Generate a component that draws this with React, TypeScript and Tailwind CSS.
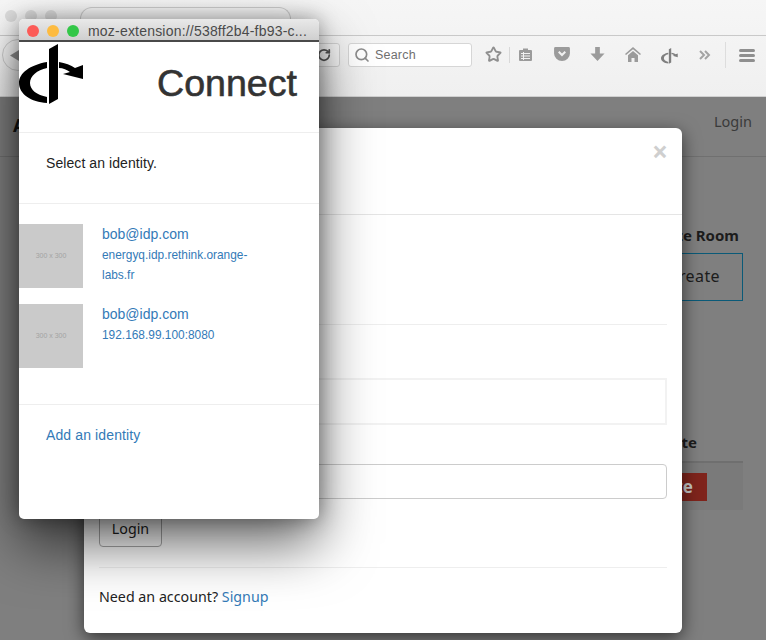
import React from 'react'
import { Search, Star, RotateCw } from 'lucide-react'

const popupFont = "font-['Liberation_Sans',Arial,sans-serif]"
const link = 'text-[#337ab7]'

const OpenIdMark = ({ width, height, fill }: { width: number; height: number; fill: string }) => (
  <svg width={width} height={height} viewBox="19 44 65 61" fill={fill}>
    <path d="M49 49L58 44V99L49 104Z" />
    <path d="M47 62C30 65 19 73 19 83C19 94 31 102 47 103V97C37 95 30 90 30 83C30 76 37 70 47 68Z" />
    <path d="M59 62C65 63 71 65 75 68L83 65V79L63 74L70 72C67 70 63 68 59 68Z" />
  </svg>
)

const Identity = ({ email, host }: { email: string; host: string }) => (
  <div className="flex h-16 gap-[19px]">
    <div className="flex h-16 w-16 shrink-0 items-center justify-center bg-[#cacaca] text-[7px] text-[#a3a3a3]">300 x 300</div>
    <div className={link}>
      <div className="text-sm leading-5">{email}</div>
      <div className="mt-[2px] w-[160px] text-[11.9px] leading-[19.5px]">{host}</div>
    </div>
  </div>
)

const Popup = () => (
  <div className={`absolute left-[19px] top-[19px] flex h-[500px] w-[300px] flex-col overflow-hidden rounded-[5px] bg-white shadow-[0_25px_55px_rgba(0,0,0,0.6),0_0_20px_rgba(0,0,0,0.35)] ${popupFont}`}>
    <div className="flex h-[23px] shrink-0 items-center gap-2 border-b-2 border-[#4a4a4a] bg-gradient-to-b from-[#e9e9e9] to-[#cfcfcf] pl-2 pt-[2px]">
      <span className="h-3 w-3 rounded-full bg-[#fc5b57]" />
      <span className="h-3 w-3 rounded-full bg-[#fdbb40]" />
      <span className="h-3 w-3 rounded-full bg-[#33c748]" />
      <span className="ml-px text-sm leading-4 tracking-[0.2px] text-[#4a4a4a]">moz-extension://538ff2b4-fb93-c...</span>
    </div>
    <div className="relative h-[91px] shrink-0 border-b border-[#eeeeee] pr-[22px] pt-[18px] text-right text-[37.6px] leading-[46px] text-[#333333] [-webkit-text-stroke:0.6px_#333333]">
      <div className="absolute left-0 top-[2px] flex">
        <OpenIdMark width={65} height={61} fill="#000000" />
      </div>
      Connect
    </div>
    <div className="h-[71px] shrink-0 border-b border-[#eeeeee] pl-[27px] pt-5 text-sm leading-5 tracking-[0.08px] text-[#222222]">Select an identity.</div>
    <div className="flex h-[201px] shrink-0 flex-col gap-4 border-b border-[#eeeeee] pt-5">
      <Identity email="bob@idp.com" host="energyq.idp.rethink.orange-labs.fr" />
      <Identity email="bob@idp.com" host="192.168.99.100:8080" />
    </div>
    <div className={`pl-[27px] pt-5 text-sm leading-5 tracking-[0.12px] ${link}`}>Add an identity</div>
  </div>
)

const Modal = () => (
  <div className="absolute left-[84px] top-[128px] flex h-[505px] w-[598px] flex-col rounded-[6px] bg-white font-['Noto_Sans',sans-serif] text-[14.25px] text-[#222222] shadow-[0_5px_18px_rgba(0,0,0,0.6)]">
    <div className="h-[87px] shrink-0 border-b border-[#e5e5e5] pr-[14px] pt-[8px] text-right text-[28px] font-bold leading-[30px] text-[#cfcfcf]">×</div>
    <div className="flex flex-1 flex-col px-[15px]">
      <div className="h-[110px] shrink-0 border-b border-[#eeeeee]" />
      <div className="mt-[53px] h-[47px] shrink-0 border-2 border-[#f2f2f2]" />
      <div className="mt-[39px] h-[35px] shrink-0 rounded-[4px] border border-[#cccccc]" />
      <div className="mt-[11px] flex h-[37px] w-[63px] shrink-0 items-center justify-center rounded-[4px] border border-[#aaaaaa]">Login</div>
      <div className="mt-5 flex-1 border-t border-[#eeeeee] pt-[19px] leading-5">
        Need an account? <span className={link}>Signup</span>
      </div>
    </div>
  </div>
)

const PageBehind = () => (
  <div className="absolute left-0 right-0 top-[97px] h-[543px] bg-[#7f7f7f] font-['Noto_Sans',sans-serif] text-[#1c1c1c]">
    <div className="flex h-[60px] items-center justify-between border-b border-[#707070] pl-[13px] pr-[14px] text-[14.5px] text-[#3a3a3a]">
      <span className="-mt-1 text-lg font-bold text-[#111111]">A</span>
      <span className="-mt-[10px]">Login</span>
    </div>
    <div className="ml-auto mr-[23px] mt-[68px] w-[140px]">
      <div className="pr-[4px] text-right text-[15px] font-bold leading-5">Create Room</div>
      <div className="mt-[8px] flex h-[48px] items-center justify-end border border-[#0a5a78] pb-[3px] pr-[22px] text-[16px] tracking-[0.4px]">Create</div>
      <div className="mt-[131px] pr-[46px] text-right text-[15px] font-bold leading-5">Invite</div>
      <div className="mt-[9px] flex h-[49px] items-center justify-end border-t-2 border-[#6f6f6f] bg-[#7a7a7a] pr-9">
        <span className="flex h-[28px] w-[70px] items-center justify-end bg-[#7f241c] pr-[14px] text-[17px] font-bold text-[#c9c9c9]">Invite</span>
      </div>
    </div>
  </div>
)

const Pocket = () => (
  <svg width="16" height="14" viewBox="0 0 17 15"><path d="M1.5 0h14A1.5 1.5 0 0 1 17 1.5V7a8.5 8 0 0 1-17 0V1.500A1.500 1.500 0 0 1 1.500 0z" fill="#9b9b9b" /><path d="M5 5l3.500 3.500L12 5" fill="none" stroke="#f2f2f2" strokeWidth="2.200" /></svg>
)

const Toolbar = () => (
  <div className="absolute left-0 right-0 top-0 h-[97px] border-b border-[#d0d0d0] bg-gradient-to-b from-[#f6f6f6] to-[#f0f0f0] font-['Liberation_Sans',sans-serif]">
    <div className="flex h-9 gap-2 border-b border-[#c9c9c9] pl-[5px] pt-[10px]">
      <span className="h-3 w-3 rounded-full bg-[#dcdcdc]" />
      <span className="h-3 w-3 rounded-full bg-[#dcdcdc]" />
      <span className="h-3 w-3 rounded-full bg-[#dcdcdc]" />
      <div className="-mb-px ml-[15px] -mt-[3px] h-[29px] w-[211px] overflow-hidden rounded-t-[12px] border border-b-0 border-[#cccccc] bg-[#f6f6f6] pl-3 pt-[6px] text-[13px] leading-5 text-[#333333]">ASCP WebRTC Hospitality Room</div>
    </div>
    <div className="relative flex h-[61px] items-start pl-[348px] pt-[7px]">
      <div className="absolute left-[2px] top-[3px] flex h-8 w-8 items-center rounded-full border border-[#cccccc] bg-[#f2f2f2] pl-[7px]">
        <svg width="9" height="11" viewBox="0 0 9 11"><path d="M9 0v11L0 5.500z" fill="#8c8c8c" /></svg>
      </div>
      <div className="absolute left-[280px] top-[7px] flex h-6 w-[60px] items-center justify-end rounded-[3px] border border-[#d4d4d4] bg-[#f7f7f7] pr-2">
        <RotateCw size={14} strokeWidth={3} className="text-[#555555]" />
      </div>
      <div className="flex h-6 w-[124px] items-center gap-[5px] rounded-[3px] border border-[#d6d6d6] bg-white pl-[5px] text-[12.5px] tracking-[0.2px] text-[#6f6f6f]">
        <Search size={16} strokeWidth={2.5} className="text-[#8c8c8c]" />
        Search
      </div>
      <Star size={17} strokeWidth={2.6} className="ml-[13px] mt-[3px] text-[#8f8f8f]" />
      <span className="ml-[7px] mt-1 h-4 w-px bg-[#d8d8d8]" />
      <svg width="15" height="15" viewBox="0 0 15 15" className="ml-[8px] mt-[4px]"><path d="M5 1.500h5V3h3a1 1 0 0 1 1 1v9a1 1 0 0 1-1 1H2a1 1 0 0 1-1-1V4a1 1 0 0 1 1-1h3z" fill="#9b9b9b" /><path d="M3 6.500h9M3 9h9M3 11.500h9M5.500 5v8" stroke="#f2f2f2" strokeWidth="1" /></svg>
      <span className="ml-[21px] mt-[4px] flex"><Pocket /></span>
      <svg width="15" height="15" viewBox="0 0 15 16" className="ml-[20px] mt-[4px]"><path d="M5 0h5v7h5l-7.500 8L0 7h5z" fill="#9b9b9b" /></svg>
      <svg width="16" height="15" viewBox="0 0 16 15" className="ml-[20px] mt-[4px]"><path d="M8 0l8 7-1 1-7-5.800L1 8 0 7z" fill="#9b9b9b" /><path d="M8 4l5 4.200V15H9.500v-4h-3v4H3V8.200z" fill="#9b9b9b" /></svg>
      <span className="ml-[20px] mt-[5px] flex"><OpenIdMark width={17} height={16} fill="#7f7f7f" /></span>
      <svg width="12" height="10" viewBox="0 0 12 10" className="ml-[21px] mt-[7px]"><path d="M1 1l4 4-4 4M6 1l4 4-4 4" fill="none" stroke="#a3a3a3" strokeWidth="2" /></svg>
      <span className="ml-[14px] -mt-[1px] h-[26px] w-px bg-[#dddddd]" />
      <div className="ml-[13px] mt-[6px] flex w-4 flex-col gap-[2px]">
        <span className="h-[3px] rounded-sm bg-[#8f8f8f]" />
        <span className="h-[3px] rounded-sm bg-[#8f8f8f]" />
        <span className="h-[3px] rounded-sm bg-[#8f8f8f]" />
      </div>
    </div>
  </div>
)

const App = () => (
  <div className="relative h-[640px] w-[766px] overflow-hidden bg-[#7f7f7f]">
    <Toolbar />
    <PageBehind />
    <Modal />
    <Popup />
  </div>
)

export default App
